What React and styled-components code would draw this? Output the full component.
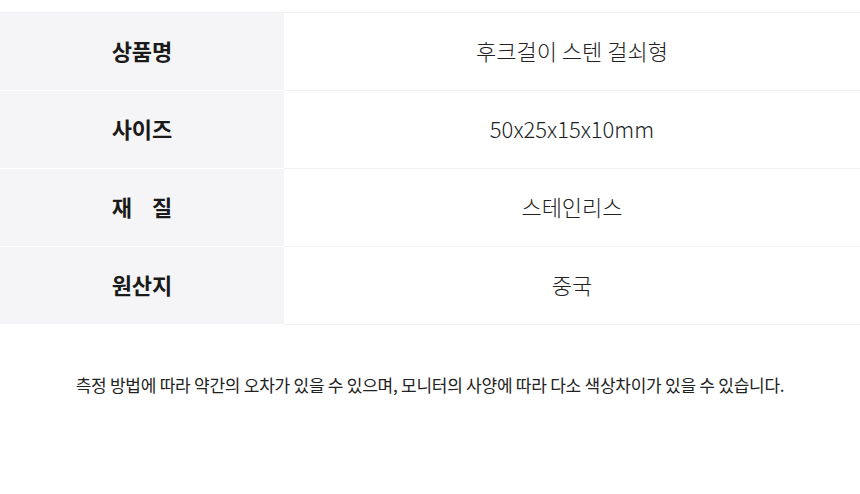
import React from "react";
import styled, { createGlobalStyle } from "styled-components";

const Global = createGlobalStyle`
  html, body { margin: 0; padding: 0; background: #fff; }
  body { font-family: "Noto Sans CJK KR", "Noto Sans", sans-serif; color: #222; }
`;

const Page = styled.div`
  padding-top: 12px;
`;

const Table = styled.div`
  display: grid;
  grid-template-columns: 284px 1fr;
  border-top: 1px solid #f1f1f3;
`;

const Cell = styled.div`
  height: 78px;
  box-sizing: border-box;
  padding-bottom: 4px;
  display: flex;
  align-items: center;
  justify-content: center;
  font-size: 22px;
  white-space: pre;
`;

const Label = styled(Cell)`
  background: #f5f5f7;
  border-bottom: 1px solid #fff;
  font-weight: 700;
  color: #1a1a1a;
`;

const Value = styled(Cell)`
  background: #fff;
  border-bottom: 1px solid #f1f1f3;
  font-weight: 300;
  color: #222;
`;

const Note = styled.p`
  margin: 47px 0 0;
  text-align: center;
  font-size: 17px;
  font-weight: 400;
  letter-spacing: -0.25px;
  color: #222;
`;

const rows = [
  ["상품명", "후크걸이 스텐 걸쇠형"],
  ["사이즈", "50x25x15x10mm"],
  ["재    질", "스테인리스"],
  ["원산지", "중국"],
];

export default function App() {
  return (
    <Page>
      <Global />
      <Table>
        {rows.map(([k, v]) => (
          <React.Fragment key={k}>
            <Label>{k}</Label>
            <Value>{v}</Value>
          </React.Fragment>
        ))}
      </Table>
      <Note>측정 방법에 따라 약간의 오차가 있을 수 있으며, 모니터의 사양에 따라 다소 색상차이가 있을 수 있습니다.</Note>
    </Page>
  );
}
